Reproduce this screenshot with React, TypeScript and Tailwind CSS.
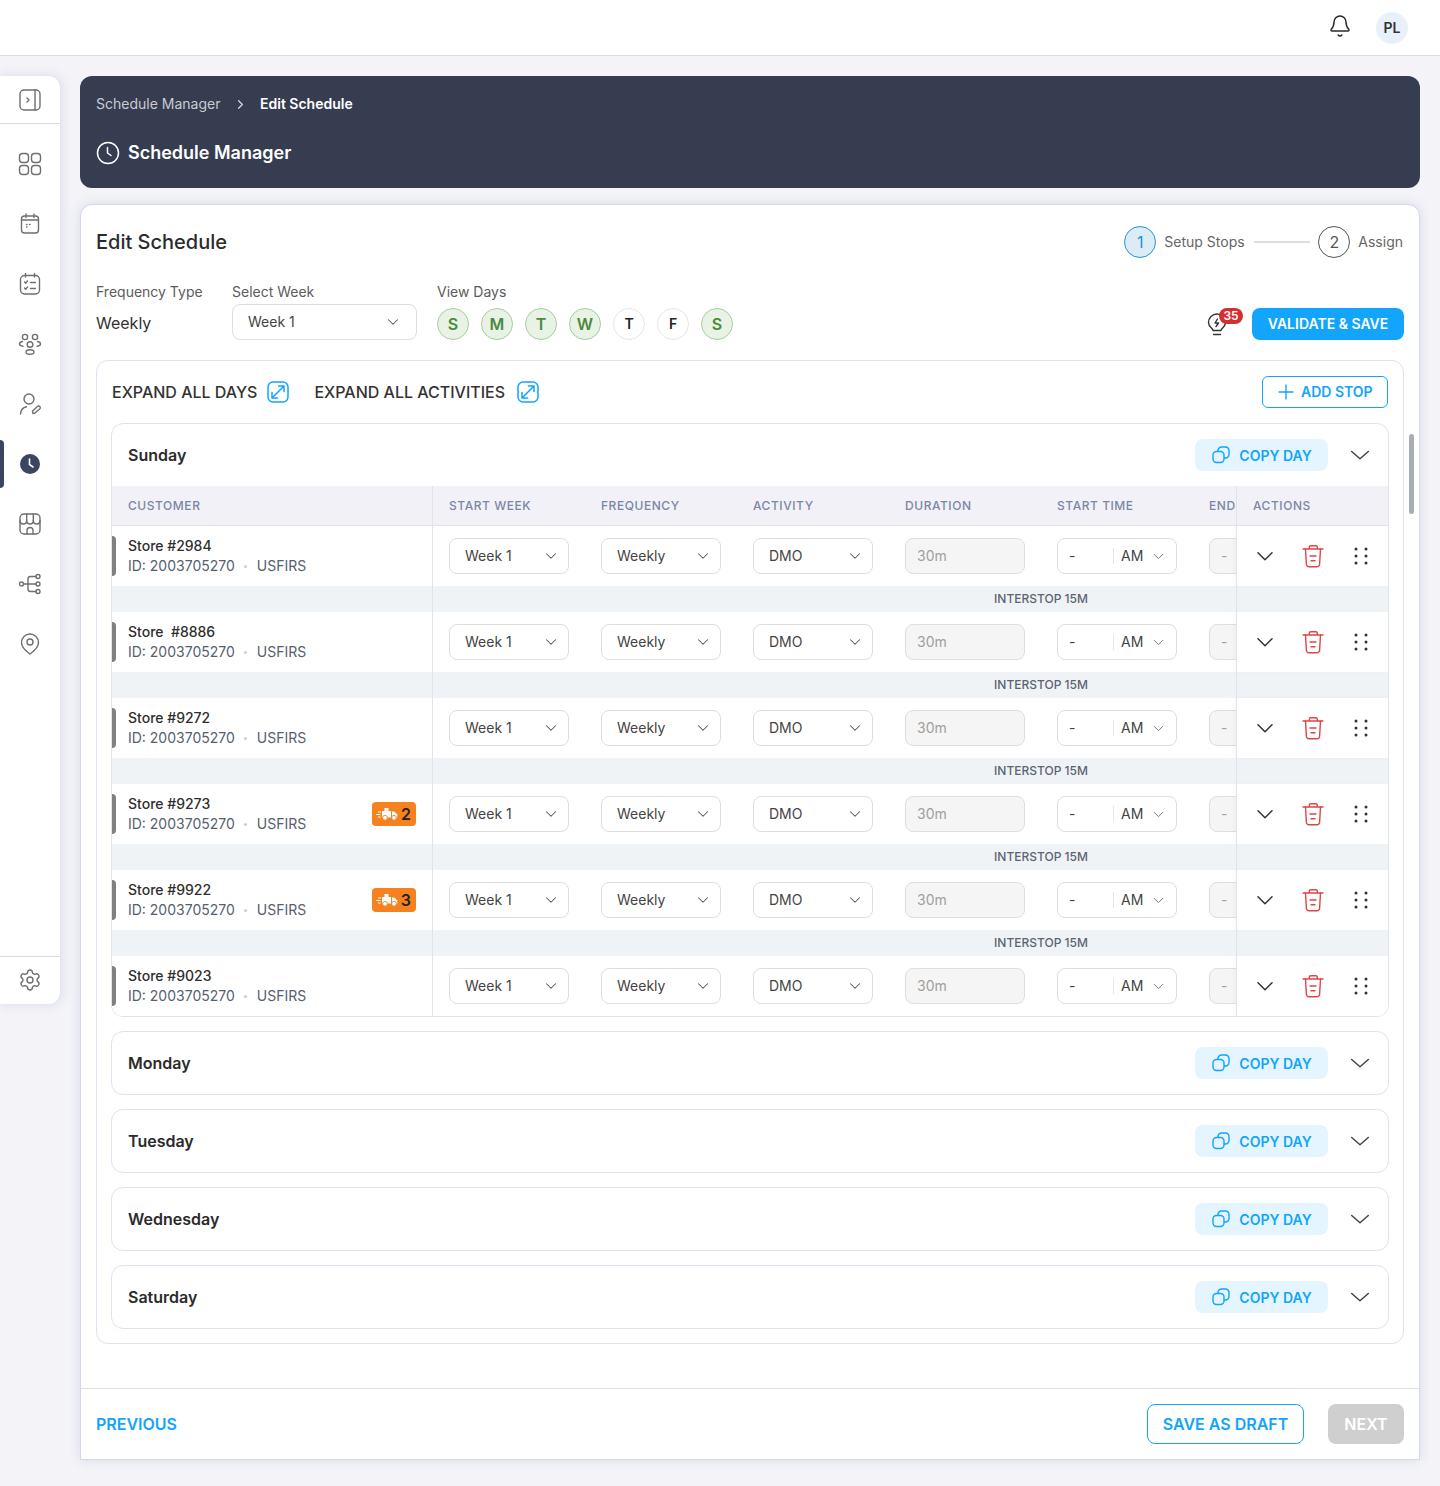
import { Bell, ChevronDown, ChevronRight, Plus, Settings } from "lucide-react";

const stores = [
  { name: "Store #2984" },
  { name: "Store\u00a0 #8886" },
  { name: "Store #9272" },
  { name: "Store #9273", badge: 2 },
  { name: "Store #9922", badge: 3 },
  { name: "Store #9023" },
];

const viewDays = [
  { label: "S", on: true },
  { label: "M", on: true },
  { label: "T", on: true },
  { label: "W", on: true },
  { label: "T", on: false },
  { label: "F", on: false },
  { label: "S", on: true },
];

const columns = ["Start Week", "Frequency", "Activity", "Duration", "Start Time", "End"];

function SideIcon({ children }: { children: React.ReactNode }) {
  return (
    <svg width="24" height="24" viewBox="0 0 24 24" fill="none" stroke="#6f6f6f" strokeWidth="1.4" strokeLinecap="round" strokeLinejoin="round">
      {children}
    </svg>
  );
}

function Sidebar() {
  return (
    <aside className="w-[61px] h-[928px] shrink-0 flex flex-col bg-white rounded-r-xl border-r border-[#dfe3f2] shadow-[0_0_12px_rgba(70,80,140,0.14)]">
      <div className="h-[48px] flex items-center justify-center border-b border-[#d9dbe3]">
        <SideIcon>
          <rect x="2" y="2" width="20" height="20" rx="4" />
          <path d="M17 2v20" />
          <path d="M9 10l2 2-2 2" />
        </SideIcon>
      </div>
      <div className="flex flex-col pt-[10px]">
        <div className="h-[60px] flex items-center justify-center">
          <SideIcon>
            <rect x="1.500" y="1.500" width="9" height="9" rx="3" />
            <rect x="13.500" y="1.500" width="9" height="9" rx="3" />
            <rect x="1.500" y="13.500" width="9" height="9" rx="3" />
            <rect x="13.500" y="13.500" width="9" height="9" rx="3" />
          </SideIcon>
        </div>
        <div className="h-[60px] flex items-center justify-center">
          <SideIcon>
            <rect x="3.500" y="4" width="17" height="17" rx="3" />
            <path d="M8 2v3.500M16 2v3.500M3.500 8h17" />
            <path d="M8.500 12.500h.5M8.500 15h.5M11.500 12.500h.5" />
          </SideIcon>
        </div>
        <div className="h-[60px] flex items-center justify-center">
          <SideIcon>
            <rect x="2.500" y="3.500" width="19" height="18.500" rx="4" />
            <path d="M7.500 1.500v3.500M16.500 1.500v3.500" />
            <path d="M6.500 10l1.200 1.200L9.500 9M6.500 16l1.200 1.200 1.800-2.200M12.500 10.500h5M12.500 16.500h5" />
          </SideIcon>
        </div>
        <div className="h-[60px] flex items-center justify-center">
          <SideIcon>
            <circle cx="7" cy="5" r="2.600" />
            <circle cx="17" cy="5" r="2.600" />
            <circle cx="12" cy="12.500" r="2.800" />
            <path d="M4.500 9.500C2.500 9.800 1.500 11 1.500 12s1.200 2 3.500 2.200M19.500 9.500c2 .3 3 1.500 3 2.500s-1.200 2-3.500 2.200" />
            <ellipse cx="12" cy="20" rx="4" ry="2.300" />
          </SideIcon>
        </div>
        <div className="h-[60px] flex items-center justify-center">
          <SideIcon>
            <circle cx="11" cy="7" r="5" />
            <path d="M2.500 22c.3-4 2.600-6.500 6-7.200" />
            <path d="M15 21.500l-.5-2.500 5-4.500c.8-.7 1.800-.6 2.400.1s.5 1.700-.2 2.400l-5 4.300z" />
          </SideIcon>
        </div>
        <div className="h-[60px] flex items-center justify-center relative">
          <div className="absolute left-0 top-[6px] w-1 h-[48px] bg-[#3b4562] rounded-r" />
          <svg width="24" height="24" viewBox="0 0 24 24" fill="none">
            <circle cx="12" cy="12" r="10" fill="#3b4562" />
            <path d="M11.500 7v5.500l3.500 2.500" stroke="#fff" strokeWidth="1.600" strokeLinecap="round" strokeLinejoin="round" />
          </svg>
        </div>
        <div className="h-[60px] flex items-center justify-center">
          <SideIcon>
            <rect x="2" y="2" width="20" height="20" rx="4" />
            <path d="M2 8.500c0 2.200 1.400 3.500 3.300 3.500S8.700 10.700 8.700 8.500c0 2.200 1.400 3.500 3.300 3.500s3.300-1.300 3.300-3.500c0 2.200 1.400 3.500 3.400 3.500S22 10.700 22 8.500" />
            <path d="M8.700 2v6.500M15.300 2v6.500" />
            <path d="M9 22v-3.500a3 3 0 0 1 6 0V22" />
          </SideIcon>
        </div>
        <div className="h-[60px] flex items-center justify-center">
          <SideIcon>
            <circle cx="3.500" cy="12" r="2" />
            <circle cx="20" cy="4.500" r="2" />
            <circle cx="20" cy="12" r="2" />
            <circle cx="20" cy="19.500" r="2" />
            <path d="M5.500 12H18M10 12V7a2.500 2.500 0 0 1 2.500-2.500H18M10 12v5a2.500 2.500 0 0 0 2.500 2.500H18" />
          </SideIcon>
        </div>
        <div className="h-[60px] flex items-center justify-center">
          <SideIcon>
            <path d="M12 22c-1.500-1.200-8.500-5.500-8.500-11.500a8.500 8.500 0 0 1 17 0C20.500 16.500 13.500 20.800 12 22z" />
            <circle cx="12" cy="10" r="3" />
          </SideIcon>
        </div>
      </div>
      <div className="mt-auto h-[48px] pb-px flex items-center justify-center border-t border-[#d9dbe3]">
        <Settings size={24} strokeWidth={1.4} color="#6f6f6f" />
      </div>
    </aside>
  );
}

function Select({ label, width = "w-[120px]", pad = "pl-[15px] pr-2" }: { label: string; width?: string; pad?: string }) {
  return (
    <div className={`${width} ${pad} h-9 flex items-center justify-between rounded-lg border border-[#dedede] bg-white text-sm text-[#444]`}>
      <span>{label}</span>
      <ChevronDown size={18} strokeWidth={1.4} color="#555" />
    </div>
  );
}

function CopyIcon() {
  return (
    <svg width="20" height="20" viewBox="0 0 20 20" fill="none" stroke="#12a5fb" strokeWidth="1.400">
      <rect x="2" y="6.500" width="11" height="11" rx="3.500" />
      <path d="M7 6.500V5.500A3.500 3.500 0 0 1 10.500 2h4A3.500 3.500 0 0 1 18 5.500v4a3.500 3.500 0 0 1-3.500 3.500H13" />
    </svg>
  );
}

function DayHeader({ name }: { name: string }) {
  return (
    <div className="h-[62px] flex items-center justify-between pl-4 pr-4">
      <span className="text-base font-semibold text-[#2b2b2b]">{name}</span>
      <div className="flex items-center gap-5">
        <button className="w-[133px] h-8 flex items-center justify-center gap-2 rounded-lg bg-[#e5f5ff] text-sm font-semibold text-[#12a5fb]">
          <CopyIcon />
          <span className="pt-px">COPY DAY</span>
        </button>
        <svg width="24" height="24" viewBox="0 0 24 24" fill="none" stroke="#444" strokeWidth="1.500" strokeLinecap="round" strokeLinejoin="round">
          <path d="M3.700 8.500l8.300 7.300 8.300-7.300" />
        </svg>
      </div>
    </div>
  );
}

function ExpandIcon() {
  return (
    <svg width="22" height="22" viewBox="0 0 22 22" fill="none" stroke="#12a5fb" strokeWidth="1.500" strokeLinecap="round" strokeLinejoin="round">
      <rect x="1" y="1" width="20" height="20" rx="5" />
      <path d="M5.500 16.500l11-11M11.500 5h5.500v5.500M5 11.500V17h5.500" />
    </svg>
  );
}

function TruckBadge({ count }: { count: number }) {
  return (
    <div className="absolute left-[260px] top-[18px] w-[44px] h-6 flex items-center justify-between pl-1 pr-[5px] rounded bg-[#f5821f]">
      <svg width="22" height="14" viewBox="0 0 22 14" fill="#fff">
        <path d="M6 4h2.500V1h4v3H15v6.500H6z" />
        <path d="M16 4.500h2.300l3 3V10.500H16z" />
        <circle cx="9" cy="10.800" r="2.400" stroke="#f5821f" strokeWidth="0.900" />
        <circle cx="18" cy="10.800" r="2.400" stroke="#f5821f" strokeWidth="0.900" />
        <rect x="2" y="4.500" width="3" height="1" />
        <rect x="0" y="7" width="4.500" height="1" />
        <rect x="2" y="9.500" width="2.500" height="1" />
      </svg>
      <span className="text-base font-semibold leading-none text-[#222]">{count}</span>
    </div>
  );
}

function StoreRow({ name, badge }: { name: string; badge?: number }) {
  return (
    <div className="h-[60px] flex bg-white">
      <div className="w-[321px] shrink-0 relative flex flex-col justify-center pl-4 border-r border-[#dfe3f0]">
        <div className="absolute left-0 top-[10px] w-1 h-10 rounded-r bg-[#808080]" />
        <div className="text-sm leading-5 font-medium text-[#2e2e2e]">{name}</div>
        <div className="text-sm leading-5 text-[#566070] flex items-center">
          ID: 2003705270
          <span className="ml-[9px] mr-[10px] w-[3px] h-[3px] rounded-full bg-[#c9cdd8]" />
          USFIRS
        </div>
        {badge && <TruckBadge count={badge} />}
      </div>
      <div className="flex-1 min-w-0 overflow-hidden flex items-center">
        <div className="w-[152px] shrink-0 pl-4">
          <Select label="Week 1" />
        </div>
        <div className="w-[152px] shrink-0 pl-4">
          <Select label="Weekly" />
        </div>
        <div className="w-[152px] shrink-0 pl-4">
          <Select label="DMO" />
        </div>
        <div className="w-[152px] shrink-0 pl-4">
          <div className="w-[120px] h-9 flex items-center pl-[11px] rounded-lg border border-[#dedede] bg-[#f5f5f5] text-sm text-[#a0a0a0]">30m</div>
        </div>
        <div className="w-[152px] shrink-0 pl-4">
          <div className="w-[120px] h-9 flex items-center pl-[11px] pr-[9px] rounded-lg border border-[#dedede] bg-white text-sm text-[#444]">
            <span className="w-[44px]">-</span>
            <span className="w-px h-4 bg-[#e6e6e6] mr-[7px]" />
            <span>AM</span>
            <ChevronDown size={17} strokeWidth={1.4} color="#777" className="ml-auto" />
          </div>
        </div>
        <div className="w-[152px] shrink-0 pl-4">
          <div className="w-[120px] h-9 flex items-center pl-[11px] rounded-lg border border-[#dedede] bg-[#f5f5f5] text-sm text-[#a0a0a0]">-</div>
        </div>
      </div>
      <div className="w-[152px] shrink-0 flex items-center gap-6 pl-4 border-l border-[#dfe3f0] shadow-[-2px_0_4px_rgba(70,80,140,0.04)]">
        <svg width="24" height="24" viewBox="0 0 24 24" fill="none" stroke="#333" strokeWidth="1.500" strokeLinecap="round" strokeLinejoin="round">
          <path d="M5 8.700l7 7 7-7" />
        </svg>
        <svg width="24" height="24" viewBox="0 0 24 24" fill="none" stroke="#e04444" strokeWidth="1.400" strokeLinecap="round" strokeLinejoin="round">
          <path d="M2 5h20M8.300 5V3.200a1.500 1.500 0 0 1 1.500-1.500h5a1.500 1.500 0 0 1 1.500 1.500V5" />
          <path d="M4.500 5l.9 15.200a2.500 2.500 0 0 0 2.500 2.500h8.200a2.500 2.500 0 0 0 2.500-2.500L19.500 5" />
          <path d="M9 12h6M10 16.700h4" />
        </svg>
        <svg width="24" height="24" viewBox="0 0 24 24" fill="#333">
          <circle cx="7" cy="5" r="1.500" />
          <circle cx="17" cy="5" r="1.500" />
          <circle cx="7" cy="12" r="1.500" />
          <circle cx="17" cy="12" r="1.500" />
          <circle cx="7" cy="19" r="1.500" />
          <circle cx="17" cy="19" r="1.500" />
        </svg>
      </div>
    </div>
  );
}

function InterstopRow() {
  return (
    <div className="h-[26px] flex bg-[#f0f3f6]">
      <div className="w-[321px] shrink-0 border-r border-[#dfe3f0]" />
      <div className="flex-1 min-w-0 overflow-hidden">
        <div className="w-[1216px] text-center text-xs leading-[26px] font-medium text-[#5b6470]">INTERSTOP 15M</div>
      </div>
      <div className="w-[152px] shrink-0 border-l border-[#dfe3f0]" />
    </div>
  );
}

function SundayTable() {
  return (
    <div>
      <div className="h-10 flex bg-[#f1f1f7] border-b border-[#dfe3f0] text-xs font-medium tracking-[0.55px] text-[#7a86a6] uppercase">
        <div className="w-[321px] shrink-0 flex items-center pl-4 border-r border-[#dfe3f0]">Customer</div>
        <div className="flex-1 min-w-0 overflow-hidden flex items-center">
          {columns.map((c) => (
            <div key={c} className="w-[152px] shrink-0 pl-4 whitespace-nowrap">
              {c}
            </div>
          ))}
        </div>
        <div className="w-[152px] shrink-0 flex items-center pl-4 border-l border-[#dfe3f0]">Actions</div>
      </div>
      {stores.map((s, i) => (
        <div key={s.name}>
          <StoreRow name={s.name} badge={s.badge} />
          {i < stores.length - 1 && <InterstopRow />}
        </div>
      ))}
    </div>
  );
}

export default function App() {
  return (
    <div className="min-h-[1486px] bg-[#f3f3f8] font-['Inter',sans-serif]">
      <header className="h-[56px] flex items-center justify-end gap-[24px] pr-8 bg-white border-b border-[#dcdde3]">
        <Bell size={24} strokeWidth={1.5} color="#2b2b2b" className="mb-1" />
        <div className="w-8 h-8 rounded-full bg-[#e8f0fa] flex items-center justify-center text-sm font-semibold text-[#333]">PL</div>
      </header>

      <div className="flex gap-[19px] pt-5 pr-5 pb-[26px]">
        <Sidebar />

        <main className="flex-1 min-w-0 flex flex-col gap-4">
          <section className="h-[112px] rounded-xl bg-[#373d50] px-4 pt-[18px] text-white">
            <div className="h-5 flex items-center text-sm">
              <span className="text-[#c8cbd3] w-[124px] whitespace-nowrap">Schedule Manager</span>
              <ChevronRight size={15} className="ml-[13px] mr-[12px] text-[#d5d7dd]" />
              <span className="font-semibold">Edit Schedule</span>
            </div>
            <div className="mt-[25px] flex items-center gap-2 text-lg font-semibold">
              <svg width="24" height="24" viewBox="0 0 24 24" fill="none" stroke="#fff" strokeWidth="1.500" strokeLinecap="round" strokeLinejoin="round">
                <circle cx="12" cy="12" r="10.500" />
                <path d="M11.500 6.500v5.500l3.500 2.500" />
              </svg>
              Schedule Manager
            </div>
          </section>

          <section className="relative rounded-t-xl bg-white border border-[#d0d7ee] shadow-[0_0_12px_rgba(70,80,140,0.14)]">
            <div className="absolute left-[1328px] top-[229px] w-[5px] h-20 rounded bg-[#a8adb5]" />
            <div className="px-[15px] pt-[21px]">
              <div className="h-8 flex items-center justify-between">
                <h1 className="text-xl font-medium text-[#2b2b2b]">Edit Schedule</h1>
                <div className="flex items-center pr-px text-sm text-[#666]">
                  <span className="w-8 h-8 rounded-full bg-[#dcecf7] border border-[#1f96dc] flex items-center justify-center text-base text-[#1f8fd6]">1</span>
                  <span className="ml-2 w-[82px]">Setup Stops</span>
                  <span className="w-14 h-0.5 bg-[#dedede] mx-2" />
                  <span className="w-8 h-8 rounded-full border border-[#555] flex items-center justify-center text-base text-[#555]">2</span>
                  <span className="ml-2">Assign</span>
                </div>
              </div>

              <div className="mt-6 flex items-end">
                <div className="w-[136px]">
                  <div className="text-sm leading-5 text-[#5c5c5c]">Frequency Type</div>
                  <div className="mt-0.5 pt-0.5 h-9 flex items-center text-base text-[#333]">Weekly</div>
                </div>
                <div className="w-[185px]">
                  <div className="text-sm leading-5 text-[#5c5c5c]">Select Week</div>
                  <div className="mt-0.5">
                    <Select label="Week 1" width="w-[185px]" pad="pl-[15px] pr-[14px]" />
                  </div>
                </div>
                <div className="ml-5">
                  <div className="text-sm leading-5 text-[#5c5c5c]">View Days</div>
                  <div className="mt-1.5 flex gap-3">
                    {viewDays.map((d, i) => (
                      <span
                        key={i}
                        className={`w-8 h-8 rounded-full border flex items-center justify-center ${
                          d.on
                            ? "bg-[#e8f3e6] border-[#a8cda0] text-base font-semibold text-[#4a8a3f]"
                            : "bg-white border-[#e6e6e6] text-sm font-semibold text-[#222]"
                        }`}
                      >
                        {d.label}
                      </span>
                    ))}
                  </div>
                </div>
                <div className="ml-auto flex items-center gap-[9px]">
                  <div className="relative w-[36px] h-8 flex items-end">
                    <svg className="mb-[3px]" width="20" height="24" viewBox="0 0 20 24" fill="none" stroke="#333" strokeWidth="1.400" strokeLinecap="round" strokeLinejoin="round">
                      <path d="M6 17.500c0-2-4.500-3.500-4.500-8a8.500 8.500 0 0 1 17 0c0 4.500-4.500 6-4.500 8z" />
                      <path d="M6.500 21.500h7" />
                      <path d="M10.500 6l-2.500 4h3.500L9 13.500" />
                    </svg>
                    <span className="absolute right-0 top-0 w-6 h-4 rounded-full bg-[#d32f2f] flex items-center justify-center text-xs font-semibold text-white">35</span>
                  </div>
                  <button className="w-[152px] h-8 rounded-lg bg-[#12a5fb] text-sm font-semibold text-white">VALIDATE &amp; SAVE</button>
                </div>
              </div>

              <div className="mt-5 rounded-xl border border-[#dfe3f0] px-[14px] pt-[15px] pb-[14px]">
                <div className="h-8 flex items-center justify-between pr-px pl-px">
                  <div className="flex items-center text-base font-medium text-[#333]">
                    <span>EXPAND ALL DAYS</span>
                    <span className="ml-[10px]"><ExpandIcon /></span>
                    <span className="ml-[25px]">EXPAND ALL ACTIVITIES</span>
                    <span className="ml-[12px]"><ExpandIcon /></span>
                  </div>
                  <button className="w-[126px] h-8 flex items-center gap-[3px] pl-[11px] rounded-md border border-[#12a5fb] text-sm font-semibold text-[#12a5fb]">
                    <Plus size={24} strokeWidth={1.400} />
                    ADD STOP
                  </button>
                </div>

                <div className="mt-[15px] flex flex-col gap-[14px]">
                  <div className="rounded-xl border border-[#dfe3f0] overflow-hidden">
                    <DayHeader name="Sunday" />
                    <SundayTable />
                  </div>
                  {["Monday", "Tuesday", "Wednesday", "Saturday"].map((d) => (
                    <div key={d} className="rounded-xl border border-[#dfe3f0]">
                      <DayHeader name={d} />
                    </div>
                  ))}
                </div>
              </div>
            </div>

            <footer className="mt-[44px] border-t border-[#dcdde3] px-[15px] pt-[15px] pb-[15px] flex items-center justify-between">
              <button className="text-base font-semibold text-[#12a5fb]">PREVIOUS</button>
              <div className="flex items-center gap-6">
                <button className="w-[157px] h-10 rounded-lg border border-[#12a5fb] text-base font-semibold text-[#12a5fb]">SAVE AS DRAFT</button>
                <button className="w-[76px] h-10 rounded-lg bg-[#cfcfcf] text-base font-semibold text-white">NEXT</button>
              </div>
            </footer>
          </section>
        </main>
      </div>
    </div>
  );
}
